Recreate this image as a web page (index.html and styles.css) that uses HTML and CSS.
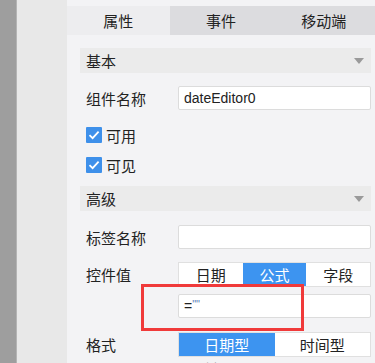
FILE: index.html
```html
<!DOCTYPE html>
<html lang="zh-CN">
<head>
    <meta charset="UTF-8">
    <title>控件属性</title>
    <link rel="stylesheet" href="styles.css">
</head>
<body>
    <div class="app">
        <div class="sidebar"></div>
        <div class="gutter"></div>

        <div class="panel">
            <!-- 标签页 -->
            <div class="tabs">
                <div class="tab active">属性</div>
                <div class="tab">事件</div>
                <div class="tab">移动端</div>
            </div>

            <div class="panel-body">
                <div class="content">
                    <div class="section-header">
                        <span>基本</span>
                        <i class="arrow"></i>
                    </div>

                    <div class="field row-name">
                        <label class="field-label">组件名称</label>
                        <input class="text-input" type="text" value="dateEditor0">
                    </div>

                    <label class="check check-first">
                        <span class="check-box">
                            <svg width="16" height="16" viewBox="0 0 16 16"><path d="M3.5 8.2 L6.6 11.2 L12.6 4.6" fill="none" stroke="#fff" stroke-width="1.8"/></svg>
                        </span>
                        可用
                    </label>
                    <label class="check">
                        <span class="check-box">
                            <svg width="16" height="16" viewBox="0 0 16 16"><path d="M3.5 8.2 L6.6 11.2 L12.6 4.6" fill="none" stroke="#fff" stroke-width="1.8"/></svg>
                        </span>
                        可见
                    </label>

                    <div class="section-header section-advanced">
                        <span>高级</span>
                        <i class="arrow"></i>
                    </div>

                    <div class="field row-tag">
                        <label class="field-label">标签名称</label>
                        <input class="text-input" type="text" value="">
                    </div>

                    <div class="field row-value">
                        <label class="field-label">控件值</label>
                        <div class="segmented">
                            <div class="seg">日期</div>
                            <div class="seg active">公式</div>
                            <div class="seg">字段</div>
                        </div>
                    </div>

                    <div class="field row-formula">
                        <span class="field-label"></span>
                        <div class="text-input formula">=<span class="quotes">""</span></div>
                        <div class="highlight"></div>
                    </div>

                    <div class="field row-format">
                        <label class="field-label">格式</label>
                        <div class="segmented">
                            <div class="seg active">日期型</div>
                            <div class="seg">时间型</div>
                        </div>
                    </div>

                    <div class="field row-next">
                        <span class="field-label"></span>
                        <span class="hint">二 例</span>
                    </div>
                </div>

                <div class="scrollbar"></div>
            </div>
        </div>
    </div>
</body>
</html>
```

FILE: styles.css
```css
/* Reset básico */
* {
    margin: 0;
    padding: 0;
    box-sizing: border-box;
}

body {
    width: 375px;
    height: 363px;
    overflow: hidden;
    font-family: "Noto Sans CJK SC", "Liberation Sans", sans-serif;
    color: #222;
    background: #f3f3f5;
}

.app {
    display: flex;
    height: 363px;
}

/* Barras laterais */
.sidebar {
    width: 17px;
    background: #9e9e9e;
    border-right: 1px solid #b4b4b4;
}

.gutter {
    width: 50px;
    background: #e8e8e8;
}

.panel {
    flex: 1;
    display: flex;
    flex-direction: column;
    background: #f3f3f5;
    padding-top: 6px;
    min-width: 0;
}

/* Abas */
.tabs {
    display: flex;
    height: 29px;
}

.tab {
    flex: 1;
    display: flex;
    align-items: center;
    justify-content: center;
    background: #dcdcdf;
    font-size: 15px;
    color: #222;
}

.tab.active {
    background: #ededef;
}

.panel-body {
    flex: 1;
    display: flex;
    padding-top: 13px;
    min-height: 0;
}

.content {
    flex: 1;
    padding: 0 6px 0 13px;
}

.scrollbar {
    width: 10px;
    margin: 2px 2px 0 0;
    background: #e6e6e6;
    border-radius: 5px 5px 0 0;
}

/* Cabeçalho das seções */
.section-header {
    height: 25px;
    display: flex;
    align-items: center;
    justify-content: space-between;
    padding: 0 6px;
    background: #ebebeb;
    font-size: 15px;
    color: #222;
}

.arrow {
    width: 0;
    height: 0;
    border-left: 5px solid transparent;
    border-right: 5px solid transparent;
    border-top: 6px solid #9a9a9a;
    margin-right: 1px;
}

.section-advanced {
    margin-top: 13px;
}

/* Campos */
.field {
    display: flex;
    align-items: center;
    position: relative;
}

.field-label {
    width: 98px;
    flex-shrink: 0;
    padding-left: 6px;
    font-size: 15px;
    color: #222;
}

.text-input {
    flex: 1;
    height: 24px;
    min-width: 0;
    border: 1px solid #dcdcdc;
    border-radius: 2px;
    background: #fff;
    padding: 0 5px;
    font-family: "Liberation Sans", "Noto Sans CJK SC", sans-serif;
    font-size: 14px;
    color: #222;
    outline: none;
}

.row-name {
    margin-top: 13px;
}

.row-tag {
    margin-top: 14px;
}

.row-value {
    margin-top: 13px;
}

.row-formula {
    margin-top: 7px;
}

.row-format {
    margin-top: 14px;
}

.row-next {
    margin-top: 2px;
    height: 12px;
    overflow: hidden;
}

.formula {
    display: flex;
    align-items: center;
}

.quotes {
    color: #5a7fb8;
    font-size: 11px;
    align-self: flex-start;
    margin-top: 3px;
}

/* Caixa de destaque vermelha */
.highlight {
    position: absolute;
    left: 61px;
    top: -10px;
    width: 163px;
    height: 47px;
    border: 3px solid #f03a3a;
}

/* Checkboxes */
.check {
    display: flex;
    align-items: center;
    gap: 4px;
    height: 16px;
    padding-left: 6px;
    margin-top: 14px;
    font-size: 15px;
    color: #222;
}

.check-first {
    margin-top: 17px;
}

.check-box {
    width: 16px;
    height: 16px;
    background: #3e90ea;
    border-radius: 1px;
    display: flex;
}

/* Botões segmentados */
.segmented {
    flex: 1;
    display: flex;
    height: 25px;
    border: 1px solid #e0e0e0;
    background: #fff;
}

.seg {
    flex: 1;
    display: flex;
    align-items: center;
    justify-content: center;
    font-size: 15px;
    color: #222;
}

.seg.active {
    background: #3d94f0;
    color: #fff;
}

.hint {
    font-size: 12px;
    color: #999;
    padding-left: 12px;
    margin-top: 4px;
}
```
